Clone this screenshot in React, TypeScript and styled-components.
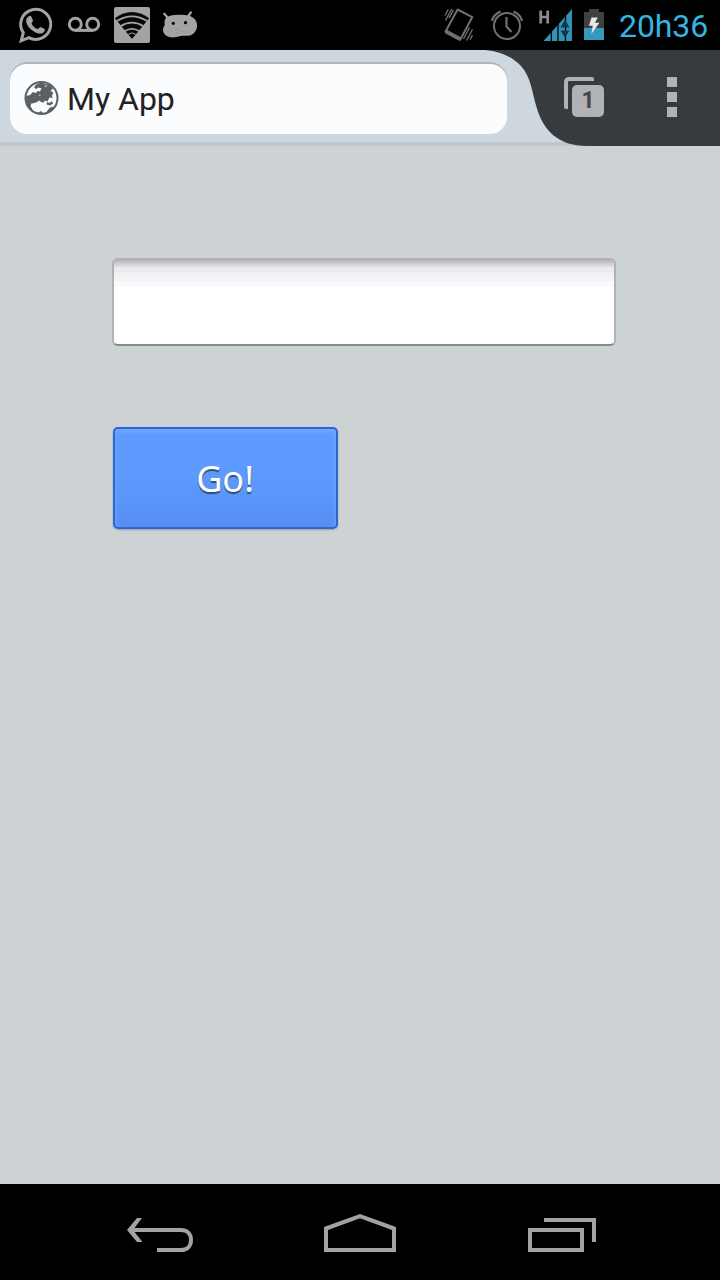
import React from "react";
import styled, { createGlobalStyle } from "styled-components";

const GlobalStyle = createGlobalStyle`
  * { box-sizing: border-box; }
  body { margin: 0; background: #000; }
`;

const Screen = styled.div`
  width: 720px;
  height: 1280px;
  display: flex;
  flex-direction: column;
  background: #cdd3d5;
  overflow: hidden;
  font-family: Roboto, "Liberation Sans", sans-serif;
`;

const StatusBar = styled.header`
  height: 50px;
  flex: none;
  display: flex;
  justify-content: space-between;
  background: #000;
  padding: 0 0 0 12px;
`;

const IconRow = styled.div`
  display: flex;
  align-items: center;
`;

const Glyph = styled.svg`
  display: block;
  flex: none;
`;

const Clock = styled.time`
  width: 111px;
  padding-left: 10px;
  font-size: 32px;
  line-height: 50px;
  padding-top: 1px;
  letter-spacing: -0.1px;
  white-space: nowrap;
  color: #33b5e5;
`;

const Toolbar = styled.div`
  position: relative;
  height: 96px;
  flex: none;
  display: flex;
  align-items: flex-start;
  padding: 12px 0 0 10px;
  background: #ced6de;
  border-bottom: 4px solid #bec7ce;
`;

const DarkTab = styled.svg`
  position: absolute;
  top: 0;
  right: 0;
  display: block;
`;

const AddressField = styled.div`
  position: relative;
  width: 497px;
  height: 72px;
  display: flex;
  align-items: center;
  gap: 7px;
  padding: 0 14px;
  border-radius: 17px;
  background: #fafcfe;
  box-shadow: inset 0 2px 0 #adb6bf;
`;

const PageTitle = styled.span`
  font-size: 32px;
  line-height: 40px;
  padding-top: 2px;
  color: #222;
`;

const ToolButton = styled.button<{ $gap: number }>`
  position: relative;
  margin: 15px 0 0 ${(p) => p.$gap}px;
  padding: 0;
  border: 0;
  background: none;
`;

const TabsButton = styled(ToolButton)`
  width: 40px;
  height: 40px;
  display: grid;
`;

const BackTab = styled.span`
  grid-area: 1 / 1;
  width: 30px;
  height: 32px;
  border: 4px solid #b1b2b4;
  border-right: 0;
  border-bottom: 0;
  border-radius: 5px 2px 0 2px;
`;

const FrontTab = styled.span`
  grid-area: 1 / 1;
  place-self: end;
  width: 32px;
  height: 32px;
  border-radius: 5px;
  background: #b1b2b4;
  color: #43484c;
  font: 700 23px/32px Roboto, sans-serif;
  text-align: center;
`;

const MenuButton = styled(ToolButton)`
  display: flex;
  flex-direction: column;
  gap: 5px;
`;

const Dot = styled.i`
  width: 10px;
  height: 10px;
  background: #b1b2b4;
`;

const Page = styled.main`
  flex: 1;
  display: flex;
  flex-direction: column;
  align-items: flex-start;
  padding: 112px 0 0 112px;
`;

const TextInput = styled.input`
  width: 504px;
  height: 88px;
  margin: 0 0 81px;
  padding: 0 12px;
  border: 2px solid #b0b2b4;
  border-bottom-color: #88898a;
  border-radius: 6px;
  outline: 0;
  font-size: 36px;
  background: linear-gradient(
    #b9b4b8 0, #c3bfc2 2px, #d9d5d8 5px, #e2dfe2 7px, #ebe9ec 7px 12px,
    #f2f0f4 12px 16px, #f5f5f6 16px 22px, #fdf9fe 22px 27px, #fff 27px
  );
`;

const GoButton = styled.button`
  width: 225px;
  height: 102px;
  margin-left: 1px;
  padding: 1px 1px 0 0;
  border: 2px solid #2b67cf;
  border-radius: 5px;
  background: linear-gradient(#5f9bff, #5d99ff 50%, #568ff2);
  box-shadow: 0 1px 2px rgba(0, 0, 0, 0.25), inset 0 2px 5px rgba(130, 178, 255, 0.7);
  color: #fff;
  font-family: "Noto Sans", "Open Sans", sans-serif;
  font-size: 36px;
  line-height: 48px;
  text-shadow: 0 2px 1px rgba(0, 0, 0, 0.5);
`;

const NavBar = styled.nav`
  height: 96px;
  flex: none;
  display: flex;
  justify-content: center;
  align-items: center;
  gap: 104px;
  background: #000;
`;

const GREY = "#a3a3a3";
const DIM = "#707070";

const Chat = () => (
  <Glyph width="48" height="50" viewBox="12 0 48 50">
    <path d="M21.2 40.8 23.3 32.7A15 15 0 1 1 28.800 37.600Z" fill="none" stroke={GREY} strokeWidth="3" />
    <path d="M29 17.3c1-1.2 2.600-1.200 3.100-.2l1.700 3.800c.2.700-1.500 2.500-1.500 3 1.400 2.800 3.400 4.500 6.300 5.600.7 0 2-2.200 2.800-2l4 2c.8.700-.3 3.100-1.800 3.900-2.400 1.200-5 .5-8.200-1-4.600-2.300-8.500-7.200-8.500-11.100 0-1.600.9-3 2.100-4Z" fill={GREY} transform="translate(-.8 -.5)" />
  </Glyph>
);

const Voicemail = () => (
  <Glyph width="48" height="50" viewBox="60 0 48 50" fill="none" stroke={GREY} strokeWidth="3">
    <circle cx="75.3" cy="24.2" r="6" />
    <circle cx="92.7" cy="24.2" r="6" />
    <path d="M75 30.400h18" />
  </Glyph>
);

const Wifi = () => (
  <Glyph width="48" height="50" viewBox="108 0 48 50">
    <rect x="114" y="7" width="36" height="36" rx="2" fill={GREY} />
    <path d="M132 39 114.800 18.200Q132 6 149.200 18.200Z" fill="#080808" />
    <path d="M116.500 21.200Q132 11.500 147.500 21.200M120.500 26.200Q132 19 143.500 26.200M124.500 31.200Q132 26.500 139.500 31.200" fill="none" stroke={GREY} strokeWidth="1.900" />
    <path d="M128.500 34.500Q132 31.500 135.500 34.500" fill="none" stroke={GREY} strokeWidth="1.200" />
  </Glyph>
);

const Droid = () => (
  <Glyph width="48" height="50" viewBox="156 0 48 50">
    <path d="M168.200 18.200 164.300 13.800M187.800 16.800 190.800 12.500" stroke={GREY} strokeWidth="2.300" strokeLinecap="round" />
    <path d="M166 18C169 15.500 173 14.800 180 14.800c7 0 11 .8 14 3.700 3.500 3.500 4 8 1.800 12-1.800 3.500-5 5.500-9 5.300-3.800-.2-6 .2-9 1-5 1.300-10 .9-13-2.300-2.600-3-2-7 0-9.500C164.500 22.500 164 20 166 18Z" fill={GREY} />
    <circle cx="173.300" cy="23.300" r="1.600" />
    <circle cx="185.500" cy="22.700" r="1.600" />
    <path d="M177.400 28.500v1M177.400 32.500v1M182.500 30.800v1" stroke="#858585" />
  </Glyph>
);

const Vibrate = () => (
  <Glyph width="48" height="50" viewBox="435 0 48 50" fill="none" stroke={DIM} strokeWidth="1.700">
    <path d="M457.600 9.500 472.200 17.200 460.200 39.700 445.400 31.700Z" strokeLinejoin="round" strokeWidth="2" />
    <path d="M446 31.500 460.500 39.200" strokeWidth="4" />
    <path d="M445 15.500 448.200 9.500M445.500 20.500 451.700 9M449 18 453.500 10M463.500 39 469.500 27.500M466.500 40.500 472.500 29.500M470 39.500 472.500 35" strokeWidth="1.400" />
  </Glyph>
);

const Alarm = () => (
  <Glyph width="48" height="50" viewBox="483 0 48 50" fill="none" stroke={DIM} strokeWidth="2">
    <circle cx="507" cy="26" r="13" />
    <path d="M506.500 17V26.500L511.500 32" strokeWidth="2.200" />
    <path d="M491.800 20.800Q493.800 14.500 500.500 11.500M522.200 20.800Q520.200 14.500 513.500 11.500" strokeWidth="2.200" />
  </Glyph>
);

const Signal = () => (
  <Glyph width="48" height="50" viewBox="531 0 48 50">
    <path d="M540.700 10.500V23.500M547.700 10.500V23.500M540.700 17H547.700" stroke="#8d8d8d" strokeWidth="2.700" />
    <path d="M543.500 41 572 9V41Z" fill="#3492b8" />
    <path d="M551.300 28V41M558 22V41M565.500 14V41" stroke="#000" strokeWidth="1.300" />
    <path d="M560.500 27.500 565 19.500 569.500 27.500ZM560.500 30.500 565 38 569.500 30.500Z" fill="#12394a" />
  </Glyph>
);

const Battery = () => (
  <Glyph width="30" height="50" viewBox="579 0 30 50">
    <path d="M584 12h5V9h10v3h5v16h-20Z" fill="#404040" />
    <path d="M584 28h20v12h-20Z" fill="#3798bd" />
    <path d="M591.500 17.500h6.300L595 22.800h4.500L591.300 34l1.500-8.300H589Z" fill="#e8e8e8" />
  </Glyph>
);

const Globe = () => (
  <Glyph width="36" height="36" viewBox="0 0 36 36">
    <circle cx="17.500" cy="18" r="16" fill="#fafcfe" stroke="#5c6066" strokeWidth="2" />
    <path d="M12 4.500 17 2.500 26 5 29 9 26.500 10.500 29.500 13 28 15 28.500 18 25.500 17.500 23.500 21.500 20 20.500 17 22 15.500 20.500 12 22.500 8 23.500 2.500 21.500 2 16 6 15 9 12 12 13 13.500 11 16 11.500 17.500 8.500 14.500 7.500 12 9 10 7.500Z" fill="#5c6066" />
    <path d="M2 18 8 21.500 6.500 26 9.500 31.500 4 27.500ZM18 19 20.500 20.500 19.500 23 17 21.500ZM23 22 25.500 23 28 21 29 23.500 26 25.500 22.500 24.500ZM26 27.500 29.500 26.500 28 29.500 22.500 33.500 23 31ZM14 33 17 31 20 34Z" fill="#5c6066" />
    <path d="M20.500 5.500 23 5 22 7.500ZM14.500 14.500 17 15 15.500 16.200Z" fill="#c6cace" />
  </Glyph>
);

export default function App() {
  return (
    <Screen>
      <GlobalStyle />
      <StatusBar>
        <IconRow>
          <Chat />
          <Voicemail />
          <Wifi />
          <Droid />
        </IconRow>
        <IconRow>
          <Vibrate />
          <Alarm />
          <Signal />
          <Battery />
          <Clock>20h36</Clock>
        </IconRow>
      </StatusBar>

      <Toolbar>
        <DarkTab width="240" height="96" viewBox="480 50 240 96">
          <path d="M481 50C497 50 512 56 521 66C531 77 532 92 536.500 107C543 130 558 146 587 146H720V50Z" fill="#373b3e" />
        </DarkTab>
        <AddressField>
          <Globe />
          <PageTitle>My App</PageTitle>
        </AddressField>
        <TabsButton $gap={57} aria-label="Tabs">
          <BackTab />
          <FrontTab>1</FrontTab>
        </TabsButton>
        <MenuButton $gap={63} aria-label="Menu">
          <Dot />
          <Dot />
          <Dot />
        </MenuButton>
      </Toolbar>

      <Page>
        <TextInput type="text" />
        <GoButton>Go!</GoButton>
      </Page>

      <NavBar>
        <Glyph width="100" height="96" viewBox="106 1184 100 96" fill="none" stroke={GREY} strokeWidth="4">
          <path d="M130 1230H181C187 1230 191 1234 191 1240C191 1246 187 1250 181 1250H157" />
          <path d="M142 1218H137L127 1230L137 1242H142.500L133 1230Z" fill={GREY} stroke="none" />
        </Glyph>
        <Glyph width="100" height="96" viewBox="310 1184 100 96" fill="none" stroke={GREY} strokeWidth="4">
          <path d="M326 1228.500 360 1216.200 394 1228.500V1250H326Z" />
        </Glyph>
        <Glyph width="100" height="96" viewBox="514 1184 100 96" fill="none" stroke={GREY} strokeWidth="4">
          <path d="M530 1230H582V1250H530ZM544 1220H594V1242" />
        </Glyph>
      </NavBar>
    </Screen>
  );
}
